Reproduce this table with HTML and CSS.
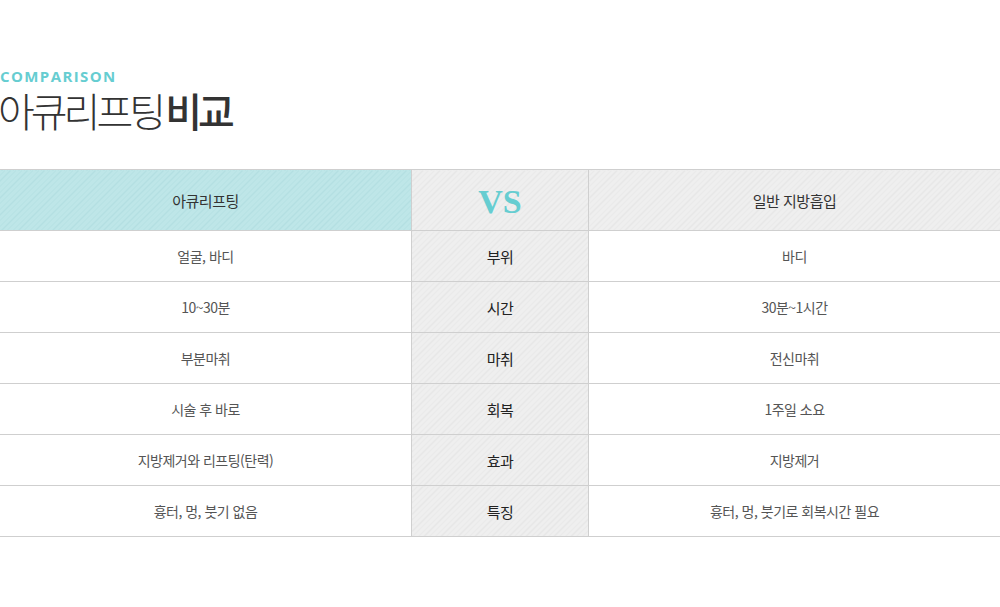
FILE: index.html
```html
<!DOCTYPE html>
<html lang="ko">
<head>
<meta charset="utf-8">
<link rel="stylesheet" href="styles.css">
</head>
<body>
<section class="compare">
  <p class="eyebrow">COMPARISON</p>
  <h2 class="title"><span class="light">아큐리프팅</span> <span class="bold">비교</span></h2>
  <table class="table">
    <thead>
      <tr>
        <th class="col-a head-a">아큐리프팅</th>
        <th class="col-m vs">VS</th>
        <th class="col-b head-b">일반 지방흡입</th>
      </tr>
    </thead>
    <tbody>
      <tr><td>얼굴, 바디</td><th class="col-m label">부위</th><td>바디</td></tr>
      <tr><td>10~30분</td><th class="col-m label">시간</th><td>30분~1시간</td></tr>
      <tr><td>부분마취</td><th class="col-m label">마취</th><td>전신마취</td></tr>
      <tr><td>시술 후 바로</td><th class="col-m label">회복</th><td>1주일 소요</td></tr>
      <tr><td>지방제거와 리프팅(탄력)</td><th class="col-m label">효과</th><td>지방제거</td></tr>
      <tr><td>흉터, 멍, 붓기 없음</td><th class="col-m label">특징</th><td>흉터, 멍, 붓기로 회복시간 필요</td></tr>
    </tbody>
  </table>
</section>
</body>
</html>
```

FILE: styles.css
```css
html, body {
  margin: 0;
  padding: 0;
  background: #fff;
}
body {
  font-family: "Noto Sans CJK KR", "Noto Sans", sans-serif;
  color: #555;
}
.compare {
  padding-top: 66px;
}
.eyebrow {
  margin: 0;
  font-family: "Open Sans", "Noto Sans", sans-serif;
  font-weight: 700;
  font-size: 15px;
  letter-spacing: 1.4px;
  line-height: 20px;
  color: #66cdd1;
}
.title {
  margin: 0 0 35px -2px;
  font-size: 40px;
  line-height: 48px;
  letter-spacing: -4px;
  color: #333;
  font-weight: 300;
}
.title .light {
  font-weight: 300;
}
.title .bold {
  font-weight: 500;
  letter-spacing: -4px;
  margin-left: -4px;
}
.table {
  width: 100%;
  border-collapse: collapse;
  table-layout: fixed;
  border-top: 1px solid #cfcfcf;
}
.table th, .table td {
  border: 1px solid #cfcfcf;
  text-align: center;
  vertical-align: middle;
  padding: 0;
  letter-spacing: -0.5px;
}
.table tr > :first-child { border-left: 0; }
.table tr > :last-child { border-right: 0; }
.table thead th {
  height: 60px;
  font-size: 15px;
  font-weight: 400;
  color: #333;
}
.table tbody td, .table tbody th {
  height: 50px;
}
.table tbody td {
  font-size: 14px;
  color: #555;
}
.col-a { width: 411px; }
.col-m { width: 176px; }
.head-a {
  background: repeating-linear-gradient(135deg, #bee6e8 0 3px, #b4dfe2 3px 4px);
}
.head-b, .col-m {
  background: repeating-linear-gradient(135deg, #efefef 0 3px, #e5e5e5 3px 4px);
}
.table thead .vs {
  font-family: "Liberation Serif", serif;
  font-size: 34px;
  font-weight: 700;
  color: #66cdd1;
  letter-spacing: 0;
  padding-top: 4px;
  height: 56px;
  line-height: 40px;
}
.table tbody .label {
  font-size: 15px;
  font-weight: 400;
  color: #222;
}
```
